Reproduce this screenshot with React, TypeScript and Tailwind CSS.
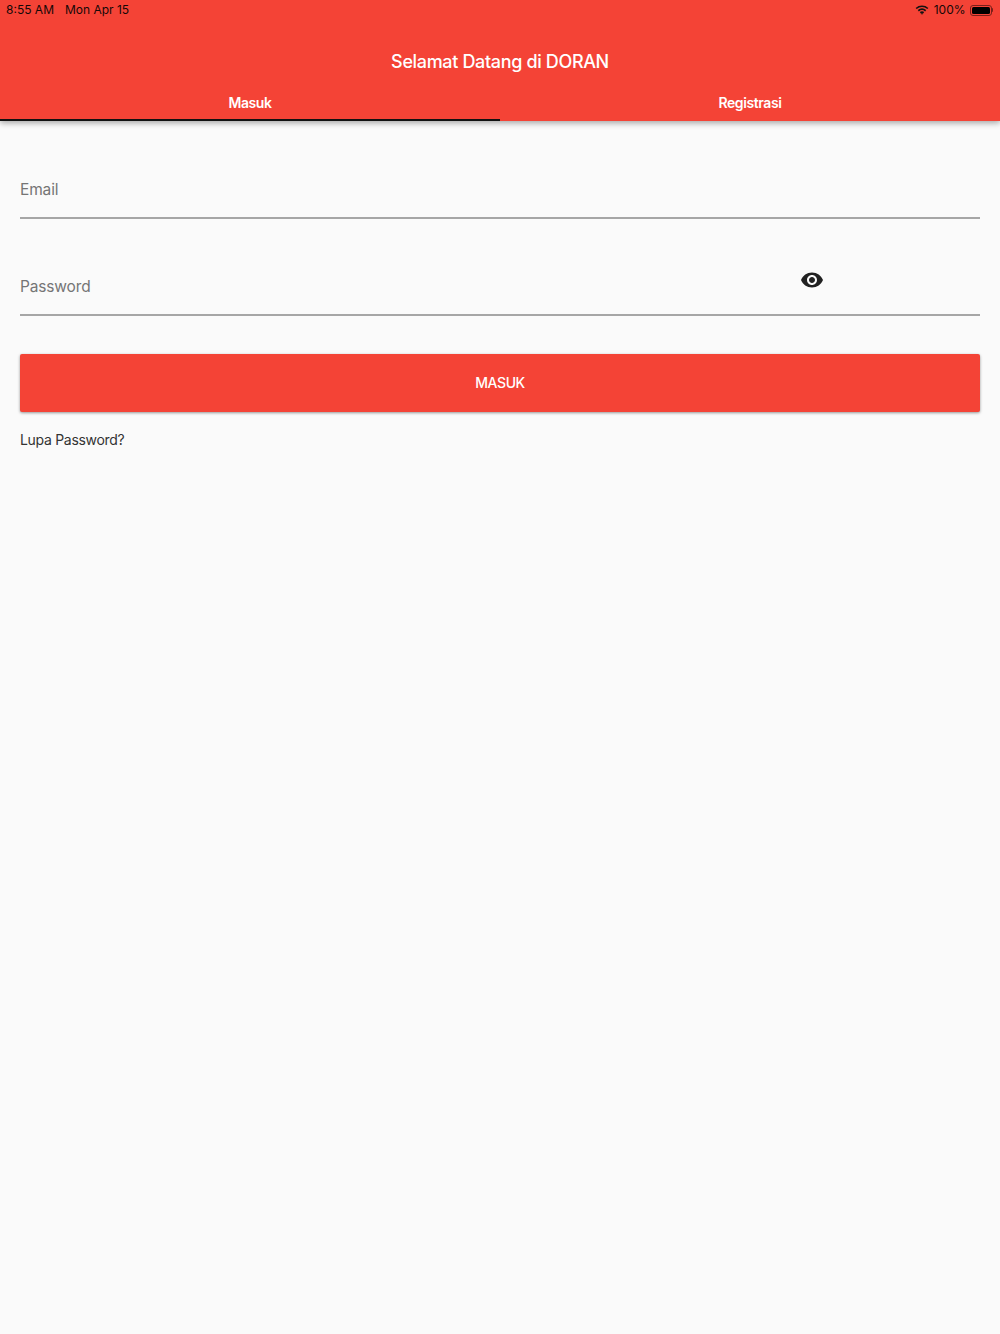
import React from "react";

function Wifi() {
  return (
    <svg width="14" height="10" viewBox="0 0 16 12" fill="none" stroke="#111" strokeWidth="2">
      <path d="M1 4.2C5 .6 11 .6 15 4.2" />
      <path d="M3.6 6.9c2.6-2.2 6.2-2.2 8.8 0" />
      <path d="M6 9.3c1.2-.9 2.8-.9 4 0" />
      <path d="M8 11.6 6.7 10.2c.8-.5 1.8-.5 2.6 0z" fill="#111" stroke="none" />
    </svg>
  );
}

function Battery() {
  return (
    <div className="flex items-center">
      <div className="w-[22px] h-[11px] rounded-[3px] border border-[#7a1f1a] p-px">
        <div className="w-full h-full rounded-[1.5px] bg-black" />
      </div>
      <div className="w-[1.5px] h-[4px] bg-[#7a1f1a] rounded-r-sm" />
    </div>
  );
}

function Eye() {
  return (
    <svg width="24" height="24" viewBox="0 0 24 24" fill="#212121">
      <path d="M12 4.5C7 4.5 2.73 7.61 1 12c1.73 4.39 6 7.5 11 7.5s9.27-3.11 11-7.5c-1.73-4.39-6-7.5-11-7.5zM12 17c-2.76 0-5-2.24-5-5s2.24-5 5-5 5 2.24 5 5-2.24 5-5 5zm0-8c-1.66 0-3 1.34-3 3s1.34 3 3 3 3-1.34 3-3-1.34-3-3-3z" />
    </svg>
  );
}

function Field({ label, eye }: { label: string; eye?: boolean }) {
  return (
    <div className="relative h-[59px] border-b-2 border-[#a6a6a6] flex items-end pb-[17px]">
      <span className="text-[15.5px] leading-[20px] tracking-[-0.15px] text-[#757575]">{label}</span>
      {eye && (
        <div className="absolute left-[780px] top-[11px]">
          <Eye />
        </div>
      )}
    </div>
  );
}

export default function App() {
  return (
    <div className="min-h-[1334px] bg-[#fafafa] font-['Inter','Liberation_Sans',sans-serif]">
      <header className="bg-[#f44336] shadow-[0_2px_6px_rgba(0,0,0,0.35)]">
        <div className="h-[20px] flex items-center justify-between pl-[6px] pr-[7px] text-[12px] text-[#140807]">
          <div className="flex gap-[11px]">
            <span>8:55 AM</span>
            <span>Mon Apr 15</span>
          </div>
          <div className="flex items-center">
            <div className="mr-[5px]">
              <Wifi />
            </div>
            <span className="mr-[4px]">100%</span>
            <Battery />
          </div>
        </div>
        <h1 className="h-[64px] pt-[30px] text-center text-[18px] leading-[24px] font-medium tracking-[-0.35px] text-white">
          Selamat Datang di DORAN
        </h1>
        <nav className="flex h-[37px] text-[14px] font-semibold tracking-[-0.4px] text-white">
          <div className="w-1/2 flex justify-center pt-[9px] leading-[20px] border-b-2 border-[#111]">Masuk</div>
          <div className="w-1/2 flex justify-center pt-[9px] leading-[20px]">Registrasi</div>
        </nav>
      </header>
      <main className="px-[20px] pt-[39px]">
        <div className="flex flex-col gap-[38px]">
          <Field label="Email" />
          <Field label="Password" eye />
        </div>
        <button className="mt-[38px] w-full h-[58px] pb-[2px] rounded-[2px] bg-[#f44336] text-white text-[14px] font-medium tracking-[-0.4px] shadow-[0_1px_3px_rgba(0,0,0,0.4)]">
          MASUK
        </button>
        <p className="mt-[18px] text-[14px] leading-[20px] tracking-[-0.3px] text-[#333]">Lupa Password?</p>
      </main>
    </div>
  );
}
